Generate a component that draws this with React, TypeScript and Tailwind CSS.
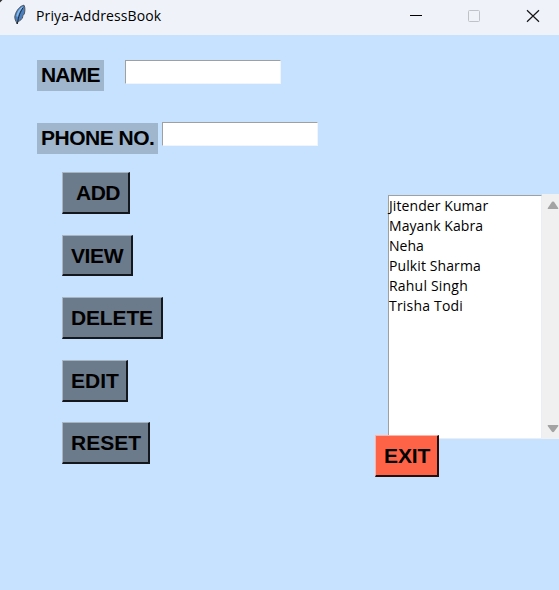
const sans = "font-['Liberation_Sans',Arial,sans-serif]";
const ui = "font-['Open_Sans','Noto_Sans',sans-serif]";

const actions = [
  { label: 'ADD', box: 'w-[68px] h-[42px] pl-[13px]', text: 'tracking-[-0.5px]' },
  { label: 'VIEW', box: 'w-[71px] h-[41px] mt-[21px] pl-[8px]', text: 'tracking-[-0.4px]' },
  { label: 'DELETE', box: 'w-[101px] h-[42px] mt-[21px] pl-[8px]', text: 'tracking-[-0.15px]' },
  { label: 'EDIT', box: 'w-[66px] h-[42px] mt-[21px] pl-[8px]', text: 'tracking-[0px]' },
  { label: 'RESET', box: 'w-[88px] h-[42px] mt-[20px] pl-[8px]', text: 'tracking-[0px]' },
];

const contacts = [
  { name: 'Jitender Kumar', tracking: 'tracking-[0.08px]' },
  { name: 'Mayank Kabra', tracking: 'tracking-[0.08px]' },
  { name: 'Neha', tracking: 'tracking-[0px]' },
  { name: 'Pulkit Sharma', tracking: 'tracking-[0.1px]' },
  { name: 'Rahul Singh', tracking: 'tracking-[0.2px]' },
  { name: 'Trisha Todi', tracking: 'tracking-[0.2px]' },
];

const bevel = 'border-t border-l border-r-2 border-b-2 border-t-[#a7b4c2] border-l-[#a7b4c2] border-r-[#14181c] border-b-[#14181c]';
const caption = `${sans} text-[21px] font-bold text-black whitespace-nowrap`;
const entry = 'h-[24px] bg-white border border-t-[#a0a0a0] border-l-[#a0a0a0] border-r-[#eef5fd] border-b-[#eef5fd] outline-none';

function Feather() {
  return (
    <svg className="ml-[13px] mt-[4px] shrink-0" width="14" height="22" viewBox="0 0 14 22">
      <path d="M11 1.2C7.3 1.7 3.3 6.3 2 11.5c-.5 2.2 0 4 1.1 6.1l1 2.4.8-2.6c2.2-.4 4.1-2.1 5.1-4.8L9.3 12l1.8-1.6c1-3 1.2-6.8-.1-9.2Z" fill="#4a80c0" stroke="#4b535c" strokeWidth="1" />
      <path d="M9.9 3.2C7 5.1 5 8 4.1 12.5" stroke="#83b9ee" strokeWidth="1.7" fill="none" />
      <path d="M10.2 3.5C7.5 7.5 5.3 12.2 4.4 20" stroke="#22272c" strokeWidth="1" fill="none" />
    </svg>
  );
}

function TitleBar() {
  return (
    <header className="relative flex h-[35px] bg-[#eff3f9]">
      <svg className="absolute top-0 left-0" width="3" height="3" viewBox="0 0 3 3"><path d="M0 0h2.5L0 2.5Z" fill="#333" /></svg>
      <Feather />
      <h1 className={`${ui} ml-[9px] w-[368px] text-[14px] leading-[32px] tracking-[0.13px] text-black whitespace-nowrap`}>Priya-AddressBook</h1>
      <svg className="mt-[8px]" width="155" height="16" viewBox="404 8 155 16" fill="none">
        <path d="M410 15.5h12" stroke="#000" />
        <rect x="468.5" y="10.5" width="11" height="11" rx="1" stroke="#bfc2c6" />
        <path d="M527 10.2l12 11.6M539 10.2l-12 11.6" stroke="#151515" strokeWidth="1.2" />
      </svg>
    </header>
  );
}

function ContactList() {
  return (
    <section className="relative mt-[159px] flex h-[245px] w-[171px]">
      <ul className={`${ui} mt-px h-[244px] w-[154px] border border-t-[#a0a0a0] border-l-[#a0a0a0] border-r-[#e8eef5] border-b-[#e8eef5] bg-white text-[14px] leading-[20px] text-black`}>
        {contacts.map((c) => (
          <li key={c.name} className={`whitespace-nowrap ${c.tracking}`}>{c.name}</li>
        ))}
      </ul>
      <div className="flex w-[17px] flex-col items-end justify-between bg-[#f0f0f0] pt-[7px] pb-[6px]">
        <svg width="12" height="9" viewBox="0 0 12 9"><path d="M5 .8Q6 0 7 .8l4.3 6.4Q11.6 8 10.8 8H1.2Q.4 8 .7 7.2Z" fill="#a3a3a3" /></svg>
        <svg width="12" height="9" viewBox="0 0 12 9"><path d="M5 7.8Q6 8.6 7 7.8l4.3-5.9Q11.6 1 10.8 1H1.2Q.4 1 .7 1.9Z" fill="#a3a3a3" /></svg>
      </div>
      <button className={`${caption} leading-[31px] absolute top-[241px] -left-[13px] h-[42px] w-[64px] border-t border-l border-r-2 border-b-2 border-t-[#ffb3a5] border-l-[#ffb3a5] border-r-[#230e0a] border-b-[#230e0a] bg-[#ff6347] pl-[8px] text-left tracking-[-0.1px]`}>
        EXIT
      </button>
    </section>
  );
}

export default function App() {
  return (
    <div className="h-[590px] w-[559px] overflow-hidden bg-[#c6e2ff]">
      <TitleBar />
      <main className="flex">
        <div className="w-[388px] pt-[25px]">
          <div className="flex pl-[37px]">
            <label htmlFor="name" className={`${caption} leading-[29px] h-[31px] w-[67px] bg-[#9fb6cd] pl-[4px] tracking-[-0.8px]`}>NAME</label>
            <input id="name" className={`${entry} ml-[21px] w-[156px]`} />
          </div>
          <div className="mt-[31px] flex pl-[37px]">
            <label htmlFor="phone" className={`${caption} leading-[29px] mt-px h-[31px] w-[121px] bg-[#9fb6cd] pl-[4px] tracking-[-0.5px]`}>PHONE NO.</label>
            <input id="phone" className={`${entry} ml-[4px] w-[156px]`} />
          </div>
          <div className="mt-[18px] flex flex-col items-start pl-[62px]">
            {actions.map((a) => (
              <button key={a.label} className={`${caption} leading-[31px] ${bevel} ${a.box} bg-[#6c7b8b] text-left`}>
                <span className={a.text}>{a.label}</span>
              </button>
            ))}
          </div>
        </div>
        <ContactList />
      </main>
    </div>
  );
}
